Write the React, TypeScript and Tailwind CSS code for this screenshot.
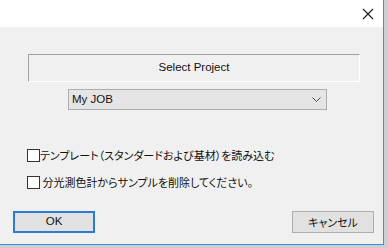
const jp = "font-['Noto_Sans_CJK_JP','Noto_Sans',sans-serif] [font-feature-settings:'palt']";
const ui = "font-['Liberation_Sans','Noto_Sans_CJK_JP',sans-serif]";

function CloseIcon() {
  return (
    <svg width="12" height="12" viewBox="0 0 12 12" aria-hidden="true">
      <path d="M1 1L11 11M11 1L1 11" stroke="#1a1a1a" strokeWidth="1.1" fill="none" />
    </svg>
  );
}

function Chevron() {
  return (
    <svg width="9" height="5" viewBox="0 0 9 5" aria-hidden="true">
      <path d="M0.5 0.5L4.5 4.5L8.5 0.5" stroke="#4d4d4d" strokeWidth="1" fill="none" />
    </svg>
  );
}

function Check({ label }: { label: string }) {
  return (
    <label className="flex h-[13px] items-center">
      <span className="h-[13px] w-[13px] shrink-0 border border-[#333333] bg-white" />
      <span className={`${jp} whitespace-pre text-[11px] leading-none text-[#111]`}>{label}</span>
    </label>
  );
}

export default function App() {
  return (
    <div className="h-[248px] w-[388px] overflow-hidden bg-[#c9ced4]">
      <div className="flex h-[245px] w-[384px] flex-col border-b border-r border-[#3f8fdc] bg-[#f0f0f0]">
        <div className="flex h-[27px] shrink-0 items-center justify-end bg-white pr-[9px]">
          <CloseIcon />
        </div>

        <div className="ml-[28px] mt-[27px] flex h-[28px] w-[332px] items-center justify-center border-b border-l border-r border-t border-b-white border-l-[#a0a0a0] border-r-white border-t-[#a0a0a0]">
          <span className={`${ui} text-[11.5px] text-[#111]`}>Select Project</span>
        </div>

        <div className="ml-[68px] mt-[7px] flex h-[21px] w-[259px] items-center justify-between border border-[#adadad] bg-[#e5e5e5] pl-[3px] pr-[5px]">
          <span className={`${ui} text-[11.5px] text-[#111]`}>My JOB</span>
          <Chevron />
        </div>

        <div className="ml-[27px] mt-[39px] flex flex-col gap-[14px]">
          <Check label="テンプレート（スタンダードおよび基材）を読み込む" />
          <Check label=" 分光測色計からサンプルを削除してください。" />
        </div>

        <div className="mt-[22px] flex justify-between pl-[13px] pr-[9px]">
          <button className={`${ui} h-[22px] w-[82px] border-2 border-[#2b7bd6] bg-[#e1e1e1] text-[11.5px] text-[#111]`}>
            OK
          </button>
          <button className={`${jp} h-[22px] w-[82px] border border-[#adadad] bg-[#e1e1e1] text-[11px] text-[#111]`}>
            キャンセル
          </button>
        </div>
      </div>
    </div>
  );
}
